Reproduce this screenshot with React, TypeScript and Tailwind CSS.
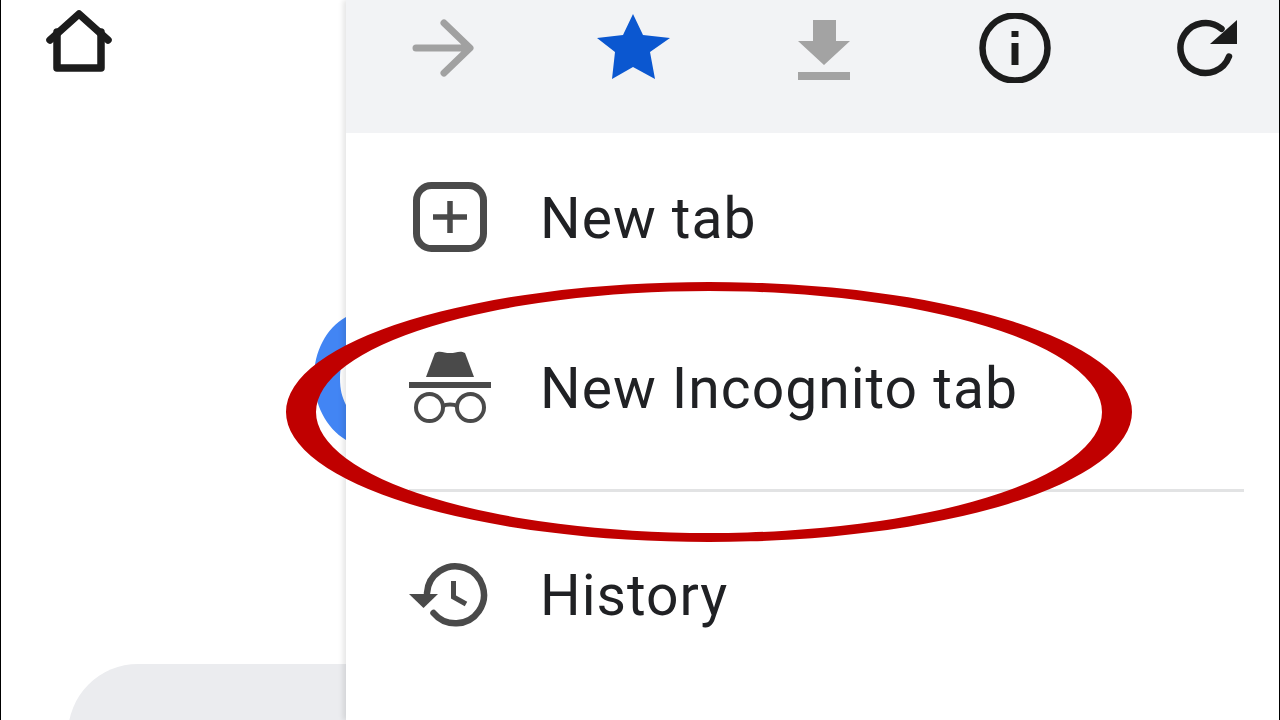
import type { ReactNode } from "react";

function Row({ icon, label, className }: { icon: ReactNode; label: string; className: string }) {
  return (
    <div className={`flex items-center ${className}`}>
      <div className="w-[194px] shrink-0 pl-[67px]">{icon}</div>
      <span className="font-['Roboto',sans-serif] text-[57px] leading-none text-[#202124] tracking-[1px]">{label}</span>
    </div>
  );
}

export default function App() {
  return (
    <div className="relative flex h-[720px] w-[1280px] overflow-hidden border-x border-black bg-white">
      <div className="relative h-full w-[345px] shrink-0">
        <div className="pl-[43px] pt-[8px]">
          <svg width="70" height="66" viewBox="0 0 70 66" fill="none" stroke="#1c1c1c" strokeWidth="7.5" strokeLinecap="round" strokeLinejoin="round">
            <path d="M6 32 L35 6 L64 32" />
            <path d="M13 24 V60 H57 V24" />
          </svg>
        </div>
      </div>
      <div className="absolute left-[67px] top-[664px] h-[120px] w-[278px] rounded-tl-[70px] bg-[#ebecef]" />
      <svg className="absolute left-[299px] top-[300px]" width="46" height="150" viewBox="0 0 46 150">
        <path d="M46 17 C26 28 14 52 14 78 C14 104 26 128 46 140 L46 105 C42 97 40 90 40 78 C40 68 42 60 46 52 Z" fill="#4285f4" />
      </svg>
      <div className="relative z-10 flex h-full flex-1 flex-col bg-white shadow-[-3px_0_5px_rgba(0,0,0,0.1)]">
        <div className="flex h-[133px] items-start bg-[#f2f3f5]">
          <svg className="ml-[65px] mt-[19px]" width="64" height="60" viewBox="0 0 64 60" fill="none" stroke="#a1a1a1" strokeWidth="7" strokeLinecap="round" strokeLinejoin="round">
            <path d="M5 29 H58 M33 4 L59 29 L33 54" />
          </svg>
          <svg className="ml-[122px] mt-[13px]" width="76" height="70" viewBox="0 0 76 70">
            <path d="M36 1 L46 22 L73 25 L53 39 L58 66 L36 54 L15 66 L18 39 L0 25 L26 22 Z" fill="#0b57d0" />
          </svg>
          <svg className="ml-[124px] mt-[20px]" width="54" height="60" viewBox="0 0 54 60">
            <path d="M16 0 H39 V21 H53 L27 45 L1 21 H16 Z M1 52 H53 V60 H1 Z" fill="#a3a3a3" />
          </svg>
          <svg className="ml-[127px] mt-[13px]" width="74" height="70" viewBox="0 0 74 70" fill="none">
            <circle cx="37" cy="35" r="32.500" stroke="#1c1c1c" strokeWidth="6.500" />
            <path d="M33.500 18 H40.500 V24 H33.500 Z M33.500 30 H40.500 V52 H33.500 Z" fill="#1c1c1c" />
          </svg>
          <svg className="ml-[122px] mt-[18px]" width="64" height="60" viewBox="0 0 64 60" fill="none">
            <path d="M55 38.500 A25 25 0 1 1 47.500 10.800" stroke="#1c1c1c" strokeWidth="6.500" strokeLinecap="round" />
            <path d="M63 2 V26 H36 Z" fill="#1c1c1c" />
          </svg>
        </div>
        <Row
          className="h-[170px]"
          label="New tab"
          icon={
            <svg className="-mt-[2px]" width="74" height="70" viewBox="0 0 74 70" fill="none">
              <rect x="3.500" y="3.500" width="67" height="63" rx="15" stroke="#4a4a4a" strokeWidth="7" />
              <path d="M37 19 V51 M20 35 H54" stroke="#4a4a4a" strokeWidth="5.500" />
            </svg>
          }
        />
        <Row
          className="h-[170px]"
          label="New Incognito tab"
          icon={
            <svg className="-ml-[4px]" width="82" height="76" viewBox="0 0 82 76" fill="none">
              <path d="M17 27 L26 3 C31 0 35 3 41 3 C47 3 51 0 56 3 L65 27 Z" fill="#4a4a4a" />
              <path d="M0 32 H82 V38 H0 Z" fill="#4a4a4a" />
              <circle cx="20.500" cy="57.500" r="13.500" stroke="#4a4a4a" strokeWidth="4" />
              <circle cx="61.500" cy="57.500" r="13.500" stroke="#4a4a4a" strokeWidth="4" />
              <path d="M34 56 C37 54 45 54 48 56" stroke="#4a4a4a" strokeWidth="4" />
            </svg>
          }
        />
        <div className="ml-[63px] mr-[35px] mt-[16px] h-[3px] shrink-0 bg-[#e2e3e4]" />
        <Row
          className="h-[207px]"
          label="History"
          icon={
            <svg className="-ml-[4px]" width="80" height="68" viewBox="0 0 80 68" fill="none">
              <path d="M18 31 A28.500 28.500 0 1 1 24.500 51" stroke="#4a4a4a" strokeWidth="6.500" strokeLinecap="round" />
              <path d="M0 32 H29 L14.500 46 Z" fill="#4a4a4a" />
              <path d="M44.500 19 V35 L57 42" stroke="#4a4a4a" strokeWidth="5" />
            </svg>
          }
        />
      </div>
      <svg className="pointer-events-none absolute left-[-1px] top-0 z-20" width="1280" height="720" viewBox="0 0 1280 720">
        <path
          fillRule="evenodd"
          fill="#c00000"
          d="M286 412 A423 130 0 1 1 1132 412 A423 130 0 1 1 286 412 Z M316 412 A393 121 0 1 0 1102 412 A393 121 0 1 0 316 412 Z"
        />
      </svg>
    </div>
  );
}
